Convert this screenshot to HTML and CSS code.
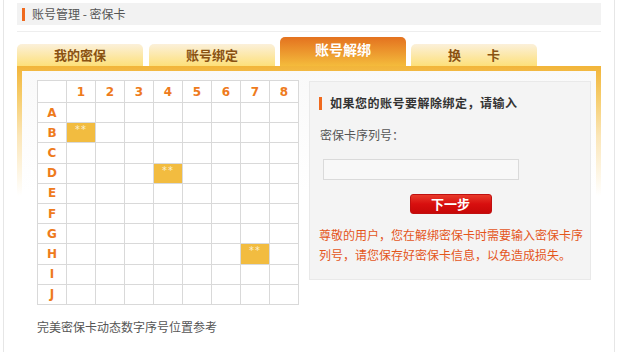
FILE: index.html
```html
<!DOCTYPE html>
<html lang="zh-CN">
<head>
<meta charset="utf-8">
<title>账号管理 - 密保卡</title>
<link rel="stylesheet" href="styles.css">
</head>
<body>
<div class="page">
  <div class="header"><span class="mark"></span><span class="header-text">账号管理 - 密保卡</span></div>
  <div class="rule"></div>
  <div class="tabs">
    <div class="tab tab-first">我的密保</div>
    <div class="tab">账号绑定</div>
    <div class="tab active">账号解绑</div>
    <div class="tab">换　　卡</div>
  </div>
  <div class="frame">
    <div class="inner">
      <div class="left">
        <div class="grid">
          <div class="c"></div><div class="c h">1</div><div class="c h">2</div><div class="c h">3</div><div class="c h">4</div><div class="c h">5</div><div class="c h">6</div><div class="c h">7</div><div class="c h">8</div>
          <div class="c h">A</div><div class="c"></div><div class="c"></div><div class="c"></div><div class="c"></div><div class="c"></div><div class="c"></div><div class="c"></div><div class="c"></div>
          <div class="c h">B</div><div class="c hl">**</div><div class="c"></div><div class="c"></div><div class="c"></div><div class="c"></div><div class="c"></div><div class="c"></div><div class="c"></div>
          <div class="c h">C</div><div class="c"></div><div class="c"></div><div class="c"></div><div class="c"></div><div class="c"></div><div class="c"></div><div class="c"></div><div class="c"></div>
          <div class="c h">D</div><div class="c"></div><div class="c"></div><div class="c"></div><div class="c hl">**</div><div class="c"></div><div class="c"></div><div class="c"></div><div class="c"></div>
          <div class="c h">E</div><div class="c"></div><div class="c"></div><div class="c"></div><div class="c"></div><div class="c"></div><div class="c"></div><div class="c"></div><div class="c"></div>
          <div class="c h">F</div><div class="c"></div><div class="c"></div><div class="c"></div><div class="c"></div><div class="c"></div><div class="c"></div><div class="c"></div><div class="c"></div>
          <div class="c h">G</div><div class="c"></div><div class="c"></div><div class="c"></div><div class="c"></div><div class="c"></div><div class="c"></div><div class="c"></div><div class="c"></div>
          <div class="c h">H</div><div class="c"></div><div class="c"></div><div class="c"></div><div class="c"></div><div class="c"></div><div class="c"></div><div class="c hl">**</div><div class="c"></div>
          <div class="c h">I</div><div class="c"></div><div class="c"></div><div class="c"></div><div class="c"></div><div class="c"></div><div class="c"></div><div class="c"></div><div class="c"></div>
          <div class="c h">J</div><div class="c"></div><div class="c"></div><div class="c"></div><div class="c"></div><div class="c"></div><div class="c"></div><div class="c"></div><div class="c"></div>
        </div>
        <div class="caption">完美密保卡动态数字序号位置参考</div>
      </div>
      <div class="panel">
        <div class="title"><span class="tmark"></span>如果您的账号要解除绑定，请输入</div>
        <div class="label">密保卡序列号：</div>
        <input class="field" type="text">
        <div class="btn-row"><button class="btn">下一步</button></div>
        <p class="notice">尊敬的用户，您在解绑密保卡时需要输入密保卡序列号，请您保存好密保卡信息，以免造成损失。</p>
      </div>
    </div>
  </div>
</div>
</body>
</html>
```

FILE: styles.css
```css
* { box-sizing: border-box; }
body {
  margin: 0;
  background: #fff;
  font-family: "Noto Sans CJK SC", "Noto Sans", sans-serif;
  font-size: 12px;
  color: #555;
}
.page {
  margin-left: 3px;
  width: 612px;
  height: 352px;
  border-left: 1px solid #e6e6e6;
  border-right: 1px solid #e6e6e6;
  padding: 3px 13px 0 13px;
}
.header {
  height: 22px;
  background: #f2f2f2;
  display: flex;
  align-items: center;
  padding-left: 5px;
}
.mark {
  width: 3px;
  height: 13px;
  background: #f06a1e;
  margin-right: 7px;
}
.header-text { line-height: 14px; color: #555; }
.rule {
  margin-top: 6px;
  height: 1px;
  background: #eeeeee;
}
.tabs {
  margin-top: 5px;
  height: 29px;
  display: flex;
  align-items: flex-end;
  gap: 5px;
}
.tab {
  width: 126px;
  height: 22px;
  border-radius: 5px 5px 0 0;
  background: linear-gradient(#fbf0da, #fde07a);
  color: #8a5212;
  font-weight: bold;
  font-size: 13px;
  line-height: 22px;
  text-align: center;
}
.tab-first { margin-right: 1px; }
.tab.active {
  height: 29px;
  background: linear-gradient(#e4721f, #f4bb3c);
  color: #fff;
  font-size: 14px;
  line-height: 24px;
}
.frame {
  height: 286px;
  padding: 5px 5px 0 5px;
  background: linear-gradient(#f2b53a 0, #f6cc6a 30px, #fbe6b8 70px, #fff 130px);
}
.inner {
  height: 100%;
  background: linear-gradient(#f9f9f9, #fff 120px);
  display: flex;
  align-items: flex-start;
  padding: 9px 5px 0 15px;
  gap: 10px;
}
.left { width: 262px; }
.grid {
  display: grid;
  grid-template-columns: repeat(9, 28px);
  grid-template-rows: 21px repeat(10, 1fr);
  gap: 1px;
  padding: 1px;
  height: 225px;
  width: 262px;
  background: #d9d9d9;
}
.c { background: #fff; }
.h {
  color: #ee7b1c;
  font-family: "DejaVu Sans", sans-serif;
  font-weight: bold;
  font-size: 12px;
  display: flex;
  align-items: center;
  justify-content: center;
}
.hl {
  background: #f2bc40;
  color: #fbeed2;
  font-family: "DejaVu Sans", sans-serif;
  font-size: 10px;
  line-height: 14px;
  text-align: center;
  letter-spacing: 1px;
}
.caption {
  margin-top: 15px;
  line-height: 14px;
  color: #555;
}
.panel {
  width: 282px;
  height: 199px;
  margin-top: 1px;
  background: #f4f4f4;
  border: 1px solid #e9e9e9;
  padding: 14px 4px 0 9px;
}
.title {
  display: flex;
  align-items: center;
  line-height: 14px;
  font-weight: bold;
  color: #333;
  letter-spacing: 0.5px;
}
.tmark {
  width: 3px;
  height: 13px;
  background: #f06a1e;
  margin-right: 8px;
}
.label {
  margin-top: 18px;
  line-height: 14px;
  padding-left: 1px;
  color: #555;
}
.field {
  display: block;
  margin: 17px 0 0 4px;
  width: 196px;
  height: 21px;
  border: 1px solid #dadada;
  background: #f8f8f8;
  padding: 0;
}
.btn-row {
  margin-top: 14px;
  display: flex;
  justify-content: center;
  padding-right: 4px;
}
.btn {
  width: 82px;
  height: 20px;
  border: 1px solid #c01010;
  border-radius: 3px;
  background: linear-gradient(#e83a2a, #d80f0f 50%, #c70808);
  color: #fff;
  font-family: "Noto Sans CJK SC", sans-serif;
  font-weight: bold;
  font-size: 13px;
  line-height: 16px;
  padding: 0;
}
.notice {
  margin: 11px 0 0;
  line-height: 20px;
  color: #e4561c;
}
```
